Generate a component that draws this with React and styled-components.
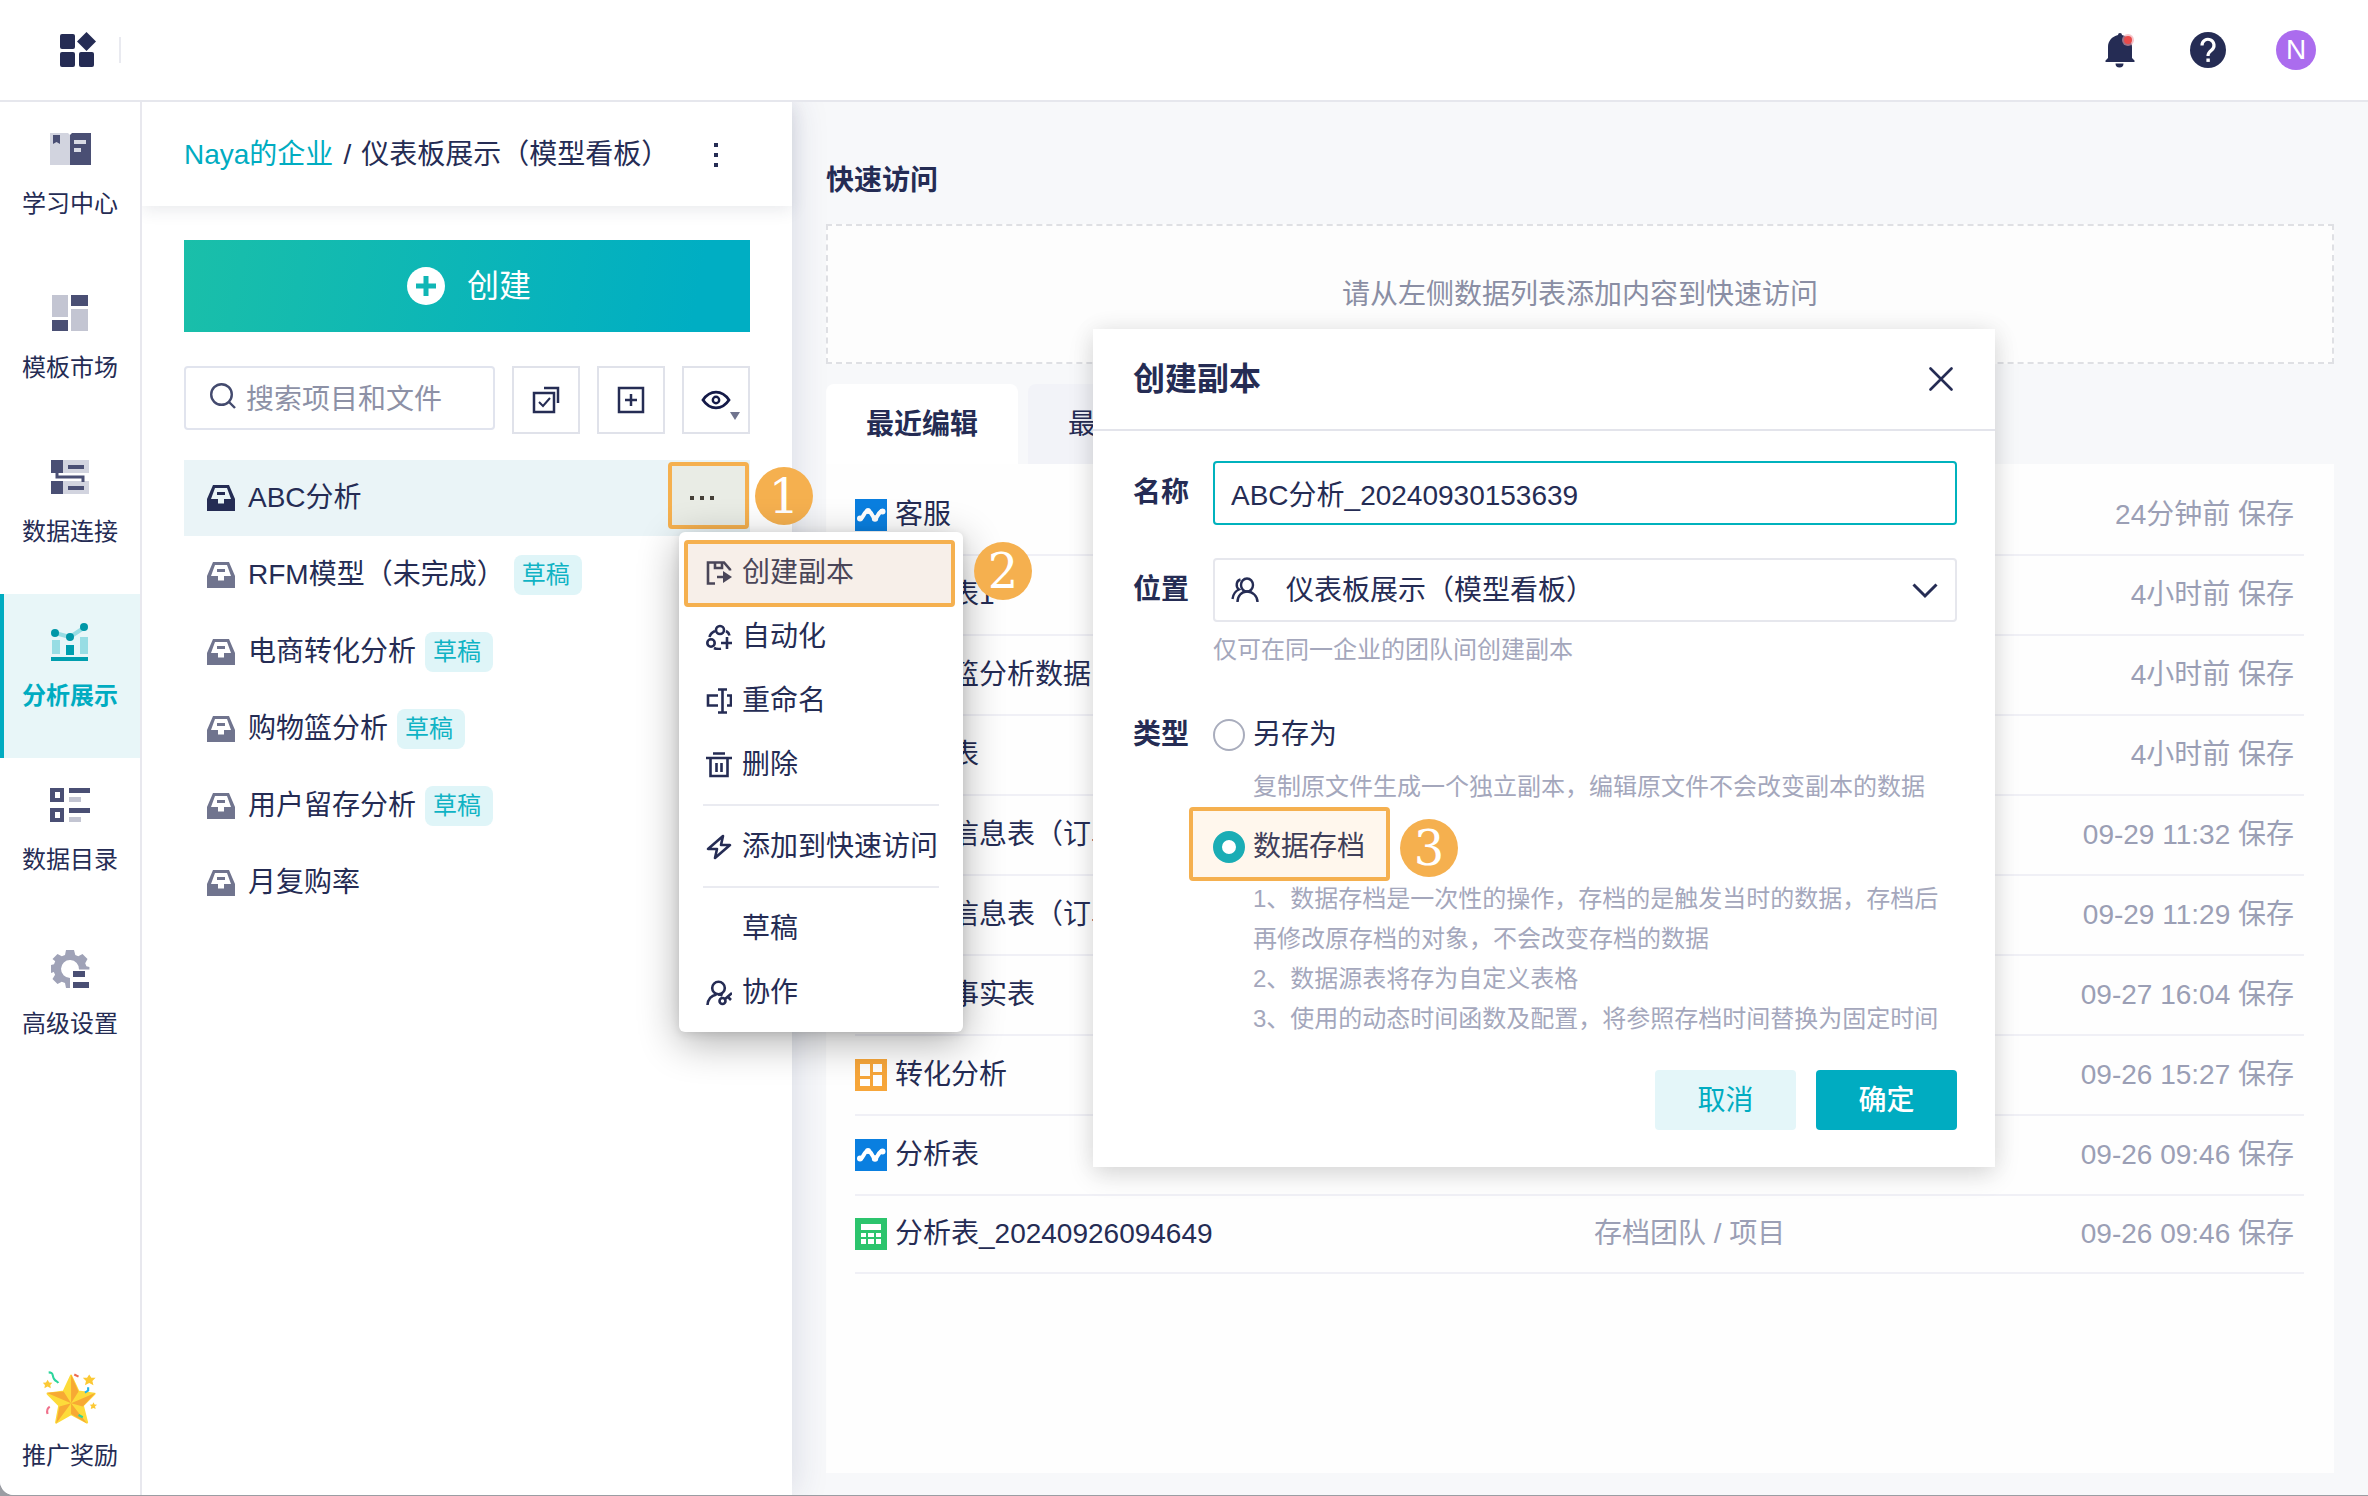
import React, { useState } from "react";
import styled, { createGlobalStyle, css } from "styled-components";

const ink = "#252c54";
const teal = "#00acc1";
const orange = "#f5b04f";

const GlobalStyle = createGlobalStyle`
  * { box-sizing: border-box; }
  body {
    margin: 0;
    background: #9b9da3;
    color: ${ink};
    font-family: "Liberation Sans", "Noto Sans CJK SC", sans-serif;
    font-size: 28px;
    line-height: 40px;
  }
  button, input, select { font: inherit; color: inherit; margin: 0; }
  button { background: none; border: 0; padding: 0; cursor: pointer; }
  a { color: inherit; text-decoration: none; }
  ul { list-style: none; margin: 0; padding: 0; }
  svg { display: block; flex: none; }
`;

/* ---------- page frame ---------- */
const Page = styled.div`
  position: relative;
  display: flex;
  flex-direction: column;
  min-height: calc(100vh - 1px);
  background: #f7f8fa;
  border-radius: 0 0 0 14px;
  overflow: hidden;
`;
const Header = styled.header`
  position: relative;
  z-index: 3;
  display: flex;
  align-items: center;
  justify-content: space-between;
  height: 102px;
  padding: 0 52px 0 58px;
  background: #fff;
  border-bottom: 2px solid #e6e7ed;
`;
const Brand = styled.div`
  display: flex;
  align-items: center;
  gap: 23px;
  &::after { content: ""; width: 2px; height: 26px; background: #e9eaf0; }
`;
const HeaderActions = styled.div`
  display: flex;
  align-items: center;
  gap: 50px;
  button:first-child { margin-right: 4px; }
`;
const Avatar = styled.button`
  width: 40px;
  height: 40px;
  border-radius: 50%;
  background: #ab6cee;
  color: #fff;
`;
const Columns = styled.div`
  display: flex;
  flex: 1;
`;

/* ---------- left navigation ---------- */
const Nav = styled.nav`
  position: relative;
  z-index: 3;
  display: flex;
  flex-direction: column;
  flex: none;
  width: 142px;
  background: #fff;
  border-right: 2px solid #e8e8ee;
`;
const NavItem = styled.a`
  display: flex;
  flex-direction: column;
  align-items: center;
  gap: 14px;
  height: 164px;
  padding-top: 26px;
  font-size: 24px;
  ${(p) =>
    p.$active &&
    css`
      background: #e8f6f8;
      box-shadow: inset 4px 0 0 ${teal};
      color: ${teal};
      font-weight: 700;
    `}
`;
const NavFooter = styled.div`
  margin-top: auto;
  a { gap: 6px; height: 129px; padding-top: 0; }
`;

/* ---------- project panel ---------- */
const Panel = styled.section`
  position: relative;
  z-index: 2;
  flex: none;
  width: 650px;
  background: #fff;
  box-shadow: 4px 0 32px rgba(40, 50, 100, 0.13);
`;
const PanelHeader = styled.div`
  display: flex;
  align-items: center;
  justify-content: space-between;
  height: 104px;
  padding: 2px 74px 0 42px;
  box-shadow: 0 4px 16px rgba(40, 50, 80, 0.1);
`;
const Crumb = styled.div`
  display: flex;
  gap: 10px;
  a { color: ${teal}; }
`;
const PanelBody = styled.div`
  padding: 34px 42px 0;
`;
const CreateButton = styled.button`
  display: flex;
  align-items: center;
  justify-content: center;
  gap: 22px;
  width: 100%;
  height: 92px;
  padding-left: 4px;
  background: linear-gradient(100deg, #1abfa9, #00aec3 90%);
  color: #fff;
  font-size: 32px;
`;
const Tools = styled.div`
  display: flex;
  align-items: flex-start;
  gap: 17px;
  margin: 34px 0 26px;
`;
const SearchBox = styled.label`
  display: flex;
  flex: 1;
  min-width: 0;
  align-items: center;
  gap: 8px;
  height: 64px;
  padding: 0 10px 0 24px;
  border: 2px solid #e1e4ee;
  border-radius: 4px;
  svg { margin-bottom: 4px; }
  input {
    width: 100%;
    min-width: 0;
    height: 44px;
    padding: 4px 0 0;
    border: 0;
    outline: 0;
    background: none;
  }
  input::placeholder { color: #8d91a6; opacity: 1; }
`;
const ToolButton = styled.button`
  display: grid;
  place-items: center;
  width: 68px;
  height: 68px;
  border: 2px solid #e0e2ea;
`;
const FileRow = styled.li`
  position: relative;
  display: flex;
  align-items: center;
  height: ${(p) => (p.$active ? 76 : 77)}px;
  padding: 0 1px 0 23px;
  background: ${(p) => (p.$active ? "#eaf4f7" : "transparent")};
  > a {
    display: flex;
    flex: 1;
    align-items: center;
    gap: 13px;
  }
`;
const Tag = styled.span`
  height: 40px;
  margin-left: -4px;
  padding: 0 12px 0 8px;
  border-radius: 8px;
  background: #dff5f8;
  color: #0fb3c4;
  font-size: 24px;
`;
const MoreButton = styled.button`
  display: grid;
  align-self: flex-start;
  place-items: center;
  width: 81px;
  height: 67px;
  margin-top: 2px;
  padding: 4px 14px 0 0;
  border: 4px solid ${orange};
  border-radius: 4px;
  background: #e9ece5;
`;

/* ---------- step markers ---------- */
const Step = styled.span`
  position: absolute;
  left: ${(p) => p.$x}px;
  top: ${(p) => p.$y}px;
  display: grid;
  place-items: center;
  width: 58px;
  height: 58px;
  border-radius: 50%;
  background: ${orange};
  color: #fff;
  font-family: "DejaVu Serif", serif;
  font-size: 48px;
  line-height: 58px;
`;

/* ---------- context menu ---------- */
const Menu = styled.div`
  position: absolute;
  left: 495px;
  top: 72px;
  z-index: 3;
  width: 284px;
  padding: 8px 0;
  border-radius: 6px;
  background: #fff;
  box-shadow: 0 10px 40px rgba(0, 0, 0, 0.32), 0 2px 10px rgba(0, 0, 0, 0.1);
`;
const MenuItem = styled.button`
  position: relative;
  z-index: 0;
  display: flex;
  align-items: center;
  gap: 10px;
  width: 100%;
  height: 64px;
  padding: 2px 0 0 27px;
  text-align: left;
  white-space: nowrap;
  ${(p) =>
    p.$marked &&
    css`
      color: #4a4658;
      &::after {
        content: "";
        position: absolute;
        z-index: -1;
        inset: 0 8px -3px 5px;
        border: 4px solid ${orange};
        border-radius: 4px;
        background: #f7efe9;
      }
    `}
`;
const MenuSpacer = styled.span`
  width: 26px;
`;
const MenuLine = styled.hr`
  height: 2px;
  margin: 8px 24px;
  border: 0;
  background: #eaebf1;
`;

/* ---------- main area ---------- */
const Main = styled.main`
  display: flex;
  flex: 1;
  flex-direction: column;
  min-width: 0;
  padding: 59px 34px 22px;
`;
const Title = styled.h2`
  margin: 0 0 23px;
  font-size: 28px;
  line-height: 40px;
`;
const QuickBox = styled.div`
  display: flex;
  align-items: center;
  justify-content: center;
  height: 140px;
  padding-top: 2px;
  border: 2px dashed #dfe0e4;
  background: #fdfdfd;
  color: #8a8ea4;
`;
const Tabs = styled.div`
  display: flex;
  gap: 10px;
  margin-top: 20px;
`;
const Tab = styled.button`
  width: 192px;
  height: 80px;
  padding-top: 2px;
  border-radius: 8px 8px 0 0;
  background: ${(p) => (p.$active ? "#fff" : "#f2f3f8")};
  font-weight: ${(p) => (p.$active ? 700 : 400)};
`;
const ListCard = styled.div`
  flex: 1;
  padding: 11px 30px 0 29px;
  background: #fefefe;
`;
const Table = styled.table`
  width: 100%;
  border-collapse: collapse;
  table-layout: fixed;
  tr { height: 80px; }
  tr:last-child { height: 78px; }
  td {
    padding: 0;
    border-bottom: 2px solid #f0f0f6;
    color: #9b9fb5;
  }
  td:first-child { width: 51%; color: ${ink}; }
  td:last-child { padding-right: 10px; text-align: right; }
`;
const FileName = styled.a`
  display: flex;
  align-items: center;
  gap: 8px;
`;

/* ---------- dialog ---------- */
const Dialog = styled.section`
  position: absolute;
  z-index: 5;
  top: 329px;
  right: 373px;
  width: 902px;
  background: #fff;
  box-shadow: 0 8px 24px rgba(0, 0, 0, 0.13), 0 0 24px rgba(0, 0, 0, 0.06);
`;
const DialogHeader = styled.header`
  display: flex;
  align-items: center;
  justify-content: space-between;
  height: 102px;
  padding: 0 42px 0 40px;
  border-bottom: 2px solid #e3e4eb;
  h3 { margin: 0; font-size: 32px; }
`;
const Form = styled.form`
  padding: 30px 38px 37px 40px;
`;
const Field = styled.div`
  display: grid;
  grid-template-columns: 56px 1fr;
  column-gap: 24px;
  margin-top: ${(p) => p.$gap || 0}px;
`;
const FieldLabel = styled.label`
  height: ${(p) => p.$height || 64}px;
  line-height: ${(p) => p.$height || 64}px;
  font-weight: 700;
`;
const TextInput = styled.input`
  width: 100%;
  height: 64px;
  padding: 0 16px;
  border: 2px solid #00b2bd;
  border-radius: 4px;
  outline: 0;
`;
const SelectWrap = styled.div`
  position: relative;
  select {
    width: 100%;
    height: 64px;
    padding: 2px 60px 0 71px;
    border: 2px solid #e6e7ed;
    border-radius: 4px;
    background: #fff;
    appearance: none;
  }
  svg { position: absolute; top: 18px; pointer-events: none; }
  svg:first-child { left: 18px; }
  svg:last-child { right: 19px; }
`;
const Hint = styled.p`
  margin: ${(p) => p.$top}px 0 0 ${(p) => p.$indent || 0}px;
  color: #a4a7bc;
  font-size: 24px;
  line-height: 40px;
`;
const Choice = styled.label`
  position: relative;
  z-index: 0;
  display: flex;
  align-items: center;
  gap: 8px;
  width: fit-content;
  height: 40px;
  margin-top: ${(p) => p.$top || 0}px;
  input {
    appearance: none;
    width: 32px;
    height: 32px;
    margin: 0;
    border: 2px solid #a9adbd;
    border-radius: 50%;
    background: #fff;
  }
  input:checked { border: 9px solid #1aadb5; }
  ${(p) =>
    p.$marked &&
    css`
      color: #40405a;
      &::before {
        content: "";
        position: absolute;
        z-index: -1;
        inset: -20px -25px -14px -24px;
        border: 4px solid ${orange};
        border-radius: 4px;
        background: #fff7ed;
      }
    `}
`;
const Footer = styled.footer`
  display: flex;
  justify-content: flex-end;
  gap: 20px;
  margin-top: 31px;
`;
const DialogButton = styled.button`
  width: 141px;
  height: 60px;
  border-radius: 4px;
  padding-top: 2px;
  background: ${(p) => (p.$primary ? teal : "#e4f6f9")};
  color: ${(p) => (p.$primary ? "#fff" : teal)};
  font-weight: ${(p) => (p.$primary ? 500 : 400)};
`;

/* ---------- icons ---------- */
const dark = "#4a4f74";
const light = "#c3c5d2";

const LogoIcon = () => (
  <svg width="38" height="38" viewBox="0 0 38 38" fill={ink}>
    <rect x="2" y="3" width="15" height="15" rx="2" />
    <rect x="2" y="21" width="15" height="15" rx="2" />
    <rect x="21" y="21" width="15" height="15" rx="2" />
    <path d="M28.5 1 38 10.5 28.5 20 19 10.5z" />
  </svg>
);
const BellIcon = () => (
  <svg width="31" height="36" viewBox="0 0 31 36">
    <path fill={ink} d="M13 3a2 2 0 0 1 4 0c6 1.500 10 6 10 12v11l2.500 2.500v1.500H.5v-1.500L3 26V15C3 9 7 4.500 13 3zM10.500 31.500h8a4 4 0 0 1-8 0z" />
    <circle cx="23" cy="8" r="6" fill="#f0a0a8" fillOpacity="0.6" />
    <circle cx="23" cy="8" r="4" fill="#e84a4a" />
  </svg>
);
const HelpIcon = () => (
  <svg width="36" height="36" viewBox="0 0 36 36">
    <circle cx="18" cy="18" r="18" fill={ink} />
    <path d="M12 13.500a6 6 0 1 1 9.600 4.600c-2.400 1.900-3.600 2.900-3.600 5.900" fill="none" stroke="#fff" strokeWidth="3.200" />
    <rect x="16.400" y="26.500" width="3.400" height="3.400" fill="#fff" />
  </svg>
);
const BookIcon = () => (
  <svg width="42" height="42" viewBox="0 0 42 42">
    <path fill="#d2d4df" d="M1 5h18l2 2v30H1z" />
    <path fill={dark} d="M4 7h7v9l-3.500-2L4 16zM23 5h19v32H21V7z" />
    <path fill="#d9dbe5" d="M25 12h12v4H25zM25 20h7v4h-7z" />
  </svg>
);
const TemplateIcon = () => (
  <svg width="42" height="42" viewBox="0 0 42 42">
    <path fill={light} d="M3 3h16v22H3zM22 17h17v22H22z" />
    <path fill={dark} d="M22 3h17v11H22zM3 28h16v11H3z" />
  </svg>
);
const LinkIcon = () => (
  <svg width="42" height="42" viewBox="0 0 42 42">
    <path fill="#d2d4df" d="M14 4h26v13H14zM14 25h26v13H14z" />
    <path fill={dark} d="M2 4h12v13H2zM2 25h12v13H2zM19 9h16v4H19zM19 30h16v4H19z" />
    <path fill="none" stroke={dark} strokeWidth="3" d="M8 16v5h26v5" />
  </svg>
);
const ChartIcon = () => (
  <svg width="42" height="42" viewBox="0 0 42 42">
    <path fill="#98dde4" d="M3 20h8v14H3zM31 17h8v17h-8z" />
    <path fill="none" stroke="#98dde4" strokeWidth="4" d="M6 13l15 4L36 7" />
    <path fill="#009eae" d="M17 25h8v10h-8zM2 37h37v4H2z" />
    <g fill="#0097a7"><circle cx="6" cy="13" r="4" /><circle cx="21" cy="17" r="4" /><circle cx="35" cy="7" r="4" /></g>
  </svg>
);
const CatalogIcon = () => (
  <svg width="42" height="42" viewBox="0 0 42 42">
    <path fill={dark} fillRule="evenodd" d="M1 4h14v14H1zM6 8v6h5V8zM1 24h14v14H1zM6 28v6h5v-6zM20 4h21v5H20zM20 24h21v5H20z" />
    <path fill={light} d="M20 13h12v5H20zM20 33h12v5H20z" />
  </svg>
);
const GearIcon = () => (
  <svg width="42" height="42" viewBox="0 0 42 42">
    <path
      fill="#9fa2b7"
      d="M17 2h8l1.300 5 3 1.300L33.500 6l5 5-2.300 4.300 1.200 3 3 .7v2.500H30A9 9 0 1 0 21 30v10h-4l-1-5-3.200-1.300L8.500 36l-5-5 2.600-4.300L4.800 24 2 25v-8l3-.7 1.200-3L3.500 11l5-5 4.300 2.300L16 7z"
    />
    <path fill={dark} d="M24 23h12v6H24zM24 34h16v6H24z" />
  </svg>
);
const StarIcon = () => (
  <svg width="64" height="64" viewBox="0 0 60 60">
    <path fill="#fddb3a" stroke="#fddb3a" strokeWidth="2" strokeLinejoin="round" d="M31 9l7 15 15 2-11 11 4 16-15-8-14 8 3-16L9 26l15-2z" />
    <path fill="#f7a934" d="M31 8v27l7-11zM54 25l-23 10 11 3zM46 54L31 35v10zM17 54l14-19-11 3zM8 25l23 10-7-11z" />
    <path fill="#fcc935" d="M48 8l2 3 4 0-3 3 1 4-4-2-4 2 1-4-3-3 4 0zM9 13l1.500 2.500 3 .3-2 2 .5 3-3-1.500-3 1.500.5-3-2-2 3-.3zM52 34l1 2 2.500.3-2 1.500.5 2.500-2-1-2.500 1 .5-2.500-1.500-1.500 2.500-.3z" />
    <g fill="none" strokeWidth="2">
      <path stroke="#2cd59c" d="M10 6c5 0 3 3 5 6s3 2 4 4M38 46l4 2" />
      <path stroke="#ee6a4e" d="M34 8l4 2" />
      <path stroke="#22b4e8" d="M44 25l3-2v-3" />
      <path stroke="#f0718c" d="M11 38c-3 2-3 4-2 7" />
    </g>
  </svg>
);
const KebabIcon = () => (
  <svg width="4" height="24" viewBox="0 0 4 24" fill={ink}>
    <path d="M0 0h4v4H0zM0 10h4v4H0zM0 20h4v4H0z" />
  </svg>
);
const DotsIcon = () => (
  <svg width="24" height="4" viewBox="0 0 24 4" fill="#453f38">
    <path d="M0 0h4v4H0zM10 0h4v4h-4zM20 0h4v4h-4z" />
  </svg>
);
const PlusCircleIcon = () => (
  <svg width="38" height="38" viewBox="0 0 38 38">
    <circle cx="19" cy="19" r="19" fill="#fff" />
    <path d="M19 9v20M9 19h20" stroke="#10b6b5" strokeWidth="5" />
  </svg>
);
const SearchIcon = () => (
  <svg width="28" height="28" viewBox="0 0 28 28" fill="none" stroke="#434a6e" strokeWidth="2.400">
    <circle cx="11.500" cy="12.500" r="10.300" />
    <path d="M18.500 19.500l6.500 6.500" />
  </svg>
);
const CheckAllIcon = () => (
  <svg width="28" height="28" viewBox="0 0 28 28" fill="none" stroke={ink}>
    <path strokeWidth="2.500" d="M2 7h20v19H2z" />
    <path strokeWidth="2.500" d="M12 2h14v15" />
    <path strokeWidth="2" d="M7 16l4 4 7-8" />
  </svg>
);
const AddBoxIcon = () => (
  <svg width="28" height="28" viewBox="0 0 28 28" fill="none" stroke={ink} strokeWidth="2.500">
    <path d="M2 2h24v24H2zM14 8v12M8 14h12" />
  </svg>
);
const EyeIcon = () => (
  <svg width="48" height="40" viewBox="0 0 48 40">
    <path fill="none" stroke="#141a48" strokeWidth="2.800" d="M11 20c7-10.500 19-10.500 26 0-7 10.500-19 10.500-26 0z" />
    <circle cx="24" cy="20" r="3.200" fill="none" stroke="#141a48" strokeWidth="2.400" />
    <path fill="#70748e" d="M38 32h10l-5 8z" />
  </svg>
);
const TrayIcon = ({ active }) => (
  <svg width="28" height="28" viewBox="0 0 28 28" fill={active ? ink : "#70748e"}>
    <path fillRule="evenodd" d="M6 1h16l6 14v12H0V15zM8 4L4 15h7v4.500h6V15h7L20 4z" />
    <path d="M10 8h8v3h-8z" />
  </svg>
);
const menuStroke = { width: 26, height: 26, viewBox: "0 0 26 26", fill: "none", stroke: "currentColor", strokeWidth: 2.6 };
const CopyIcon = () => (
  <svg {...menuStroke}>
    <path d="M9 23.500H2v-21h16l6 7v1M9 3v5h7V3M11 17h9" />
    <path d="M17 11l9 6-9 6z" fill="currentColor" stroke="none" />
  </svg>
);
const FlowIcon = () => (
  <svg {...menuStroke}>
    <circle cx="14" cy="6" r="4" />
    <circle cx="5" cy="19" r="3.700" />
    <path d="M21 13v12M15 19h12M9 7c-3 1.500-5 3.500-5.500 6M20 7c2 1 3 2.500 3.500 4.500M8 24c2 1 4.500 1.200 7 .8" />
  </svg>
);
const RenameIcon = () => (
  <svg {...menuStroke}>
    <path d="M12 7.500H2v10h10M21 7.500h4v10h-4M12 1.500h9M12 24.500h9M16.500 2v22" />
  </svg>
);
const TrashIcon = () => (
  <svg {...menuStroke}>
    <path d="M0 6h26M7 1.500h12M4.500 6v18h17V6M10.500 11v9M15.500 11v9" />
  </svg>
);
const BoltIcon = () => (
  <svg {...menuStroke} strokeLinejoin="round">
    <path d="M17 2L2 15h9L9 24 24 11h-9z" />
  </svg>
);
const CollabIcon = () => (
  <svg {...menuStroke}>
    <circle cx="12.500" cy="8" r="6.300" />
    <path d="M1.500 25c.5-6 4-9.500 9-10.500M12 14.500c2 0 3.500.5 4.500 1" />
    <circle cx="16.500" cy="21" r="3" />
    <path d="M19 19l7-6M22 17l3 3" />
  </svg>
);
const menuIcons = { copy: CopyIcon, flow: FlowIcon, rename: RenameIcon, trash: TrashIcon, bolt: BoltIcon, collab: CollabIcon };

const AnalysisIcon = () => (
  <svg width="32" height="32" viewBox="0 0 32 32">
    <path fill="#0a7fe0" d="M0 0h32v32H0z" />
    <path fill="none" stroke="#fff" strokeWidth="4" strokeLinecap="round" strokeLinejoin="round" d="M5 20c3 0 4-8 8-8s4 7 7 7 3-6 7-7" />
    <g fill="#fff"><circle cx="5" cy="19.500" r="3" /><circle cx="13" cy="12" r="3" /><circle cx="20" cy="19.500" r="3.200" /><circle cx="27.500" cy="12.500" r="3" /></g>
  </svg>
);
const BoardIcon = () => (
  <svg width="32" height="32" viewBox="0 0 32 32">
    <path fill="#f7a63a" d="M0 0h32v32H0z" />
    <path fill="#fff" d="M5 5h10v12H5zM18 5h9v8h-9zM5 20h10v7H5zM18 16h9v11h-9z" />
  </svg>
);
const SheetIcon = () => (
  <svg width="32" height="32" viewBox="0 0 32 32">
    <path fill="#2cc46d" d="M0 0h32v32H0z" />
    <path fill="#fff" d="M6 6h20v6H6zM6 15h5v4H6zM13 15h6v4h-6zM21 15h5v4h-5zM6 21h5v5H6zM13 21h6v5h-6zM21 21h5v5h-5z" />
  </svg>
);
const fileIcons = { analysis: AnalysisIcon, board: BoardIcon, sheet: SheetIcon };

const CloseIcon = () => (
  <svg width="24" height="24" viewBox="0 0 24 24" stroke={ink} strokeWidth="2.600" strokeLinecap="round">
    <path d="M1.500 1.500l21 21M22.500 1.500l-21 21" />
  </svg>
);
const TeamIcon = () => (
  <svg width="28" height="28" viewBox="0 0 28 28" fill="none" stroke={ink} strokeWidth="2.400">
    <ellipse cx="16" cy="9" rx="6" ry="6.500" />
    <path d="M6.500 26c0-6 4-10.500 9.500-10.500S26.500 20 26.500 26M9.500 3.500C5 4.500 4.500 11 8 13.500c-3.500 1.500-6 5-6.500 9.500" />
  </svg>
);
const ChevronIcon = () => (
  <svg width="26" height="28" viewBox="0 0 26 28" fill="none" stroke={ink} strokeWidth="3">
    <path d="M1.500 8.500L13 20 24.500 8.500" />
  </svg>
);

/* ---------- data ---------- */
const navItems = [
  ["学习中心", BookIcon],
  ["模板市场", TemplateIcon],
  ["数据连接", LinkIcon],
  ["分析展示", ChartIcon],
  ["数据目录", CatalogIcon],
  ["高级设置", GearIcon],
];
const projects = [
  { name: "ABC分析", active: true },
  { name: "RFM模型（未完成）", draft: true },
  { name: "电商转化分析", draft: true },
  { name: "购物篮分析", draft: true },
  { name: "用户留存分析", draft: true },
  { name: "月复购率" },
];
const menuItems = [
  { icon: "copy", label: "创建副本", marked: true },
  { icon: "flow", label: "自动化" },
  { icon: "rename", label: "重命名" },
  { icon: "trash", label: "删除", line: true },
  { icon: "bolt", label: "添加到快速访问", line: true },
  { label: "草稿" },
  { icon: "collab", label: "协作" },
];
const recent = [
  ["analysis", "客服", "", "24分钟前 保存"],
  ["sheet", "订单表1", "", "4小时前 保存"],
  ["sheet", "购物篮分析数据", "", "4小时前 保存"],
  ["sheet", "订单表", "", "4小时前 保存"],
  ["sheet", "订单信息表（订单）", "", "09-29 11:32 保存"],
  ["sheet", "订单信息表（订单）", "", "09-29 11:29 保存"],
  ["sheet", "订单事实表", "", "09-27 16:04 保存"],
  ["board", "转化分析", "", "09-26 15:27 保存"],
  ["analysis", "分析表", "", "09-26 09:46 保存"],
  ["sheet", "分析表_20240926094649", "存档团队 / 项目", "09-26 09:46 保存"],
];

function ContextMenu() {
  return (
    <Menu role="menu">
      {menuItems.map((item) => {
        const Icon = item.icon ? menuIcons[item.icon] : MenuSpacer;
        return (
          <React.Fragment key={item.label}>
            <MenuItem role="menuitem" $marked={item.marked}>
              <Icon />
              {item.label}
            </MenuItem>
            {item.line && <MenuLine />}
          </React.Fragment>
        );
      })}
      <Step $x={295} $y={10}>2</Step>
    </Menu>
  );
}

function CopyDialog() {
  const [name, setName] = useState("ABC分析_20240930153639");
  const [kind, setKind] = useState("archive");
  return (
    <Dialog role="dialog" aria-labelledby="copy-title">
      <DialogHeader>
        <h3 id="copy-title">创建副本</h3>
        <button aria-label="关闭"><CloseIcon /></button>
      </DialogHeader>
      <Form onSubmit={(e) => e.preventDefault()}>
        <Field>
          <FieldLabel htmlFor="copy-name">名称</FieldLabel>
          <TextInput id="copy-name" value={name} onChange={(e) => setName(e.target.value)} />
        </Field>
        <Field $gap={33}>
          <FieldLabel htmlFor="copy-place">位置</FieldLabel>
          <div>
            <SelectWrap>
              <TeamIcon />
              <select id="copy-place">
                <option>仪表板展示（模型看板）</option>
              </select>
              <ChevronIcon />
            </SelectWrap>
            <Hint $top={8}>仅可在同一企业的团队间创建副本</Hint>
          </div>
        </Field>
        <Field $gap={45}>
          <FieldLabel as="span" $height={40}>类型</FieldLabel>
          <div role="radiogroup" aria-label="类型">
            <Choice>
              <input type="radio" name="kind" checked={kind === "save"} onChange={() => setKind("save")} />
              另存为
            </Choice>
            <Hint $top={12} $indent={40}>复制原文件生成一个独立副本，编辑原文件不会改变副本的数据</Hint>
            <Choice $top={20} $marked>
              <input type="radio" name="kind" checked={kind === "archive"} onChange={() => setKind("archive")} />
              数据存档
              <Step $x={187} $y={-8}>3</Step>
            </Choice>
            <Hint $top={12} $indent={40}>
              1、数据存档是一次性的操作，存档的是触发当时的数据，存档后再修改原存档的对象，不会改变存档的数据
              <br />
              2、数据源表将存为自定义表格
              <br />
              3、使用的动态时间函数及配置，将参照存档时间替换为固定时间
            </Hint>
          </div>
        </Field>
        <Footer>
          <DialogButton type="button">取消</DialogButton>
          <DialogButton type="submit" $primary>确定</DialogButton>
        </Footer>
      </Form>
    </Dialog>
  );
}

export default function App() {
  return (
    <>
      <GlobalStyle />
      <Page>
        <Header>
          <Brand><LogoIcon /></Brand>
          <HeaderActions>
            <button aria-label="通知"><BellIcon /></button>
            <button aria-label="帮助"><HelpIcon /></button>
            <Avatar>N</Avatar>
          </HeaderActions>
        </Header>
        <Columns>
          <Nav>
            {navItems.map(([label, Icon]) => (
              <NavItem href="#" key={label} $active={label === "分析展示"}>
                <Icon />
                {label}
              </NavItem>
            ))}
            <NavFooter>
              <NavItem href="#">
                <StarIcon />
                推广奖励
              </NavItem>
            </NavFooter>
          </Nav>

          <Panel>
            <PanelHeader>
              <Crumb>
                <a href="#">Naya的企业</a>
                <span>/</span>
                <span>仪表板展示（模型看板）</span>
              </Crumb>
              <button aria-label="更多操作"><KebabIcon /></button>
            </PanelHeader>
            <PanelBody>
              <CreateButton><PlusCircleIcon />创建</CreateButton>
              <Tools>
                <SearchBox>
                  <SearchIcon />
                  <input type="text" aria-label="搜索" placeholder="搜索项目和文件" />
                </SearchBox>
                <ToolButton aria-label="批量选择"><CheckAllIcon /></ToolButton>
                <ToolButton aria-label="新建文件夹"><AddBoxIcon /></ToolButton>
                <ToolButton aria-label="显示"><EyeIcon /></ToolButton>
              </Tools>
              <ul>
                {projects.map((p) => (
                  <FileRow key={p.name} $active={p.active}>
                    <a href="#">
                      <TrayIcon active={p.active} />
                      {p.name}
                      {p.draft && <Tag>草稿</Tag>}
                    </a>
                    {p.active && (
                      <>
                        <MoreButton aria-label="更多"><DotsIcon /></MoreButton>
                        <Step $x={571} $y={7}>1</Step>
                        <ContextMenu />
                      </>
                    )}
                  </FileRow>
                ))}
              </ul>
            </PanelBody>
          </Panel>

          <Main>
            <Title>快速访问</Title>
            <QuickBox>请从左侧数据列表添加内容到快速访问</QuickBox>
            <Tabs>
              <Tab $active>最近编辑</Tab>
              <Tab>最近访问</Tab>
            </Tabs>
            <ListCard>
              <Table>
                <tbody>
                  {recent.map(([kind, name, team, time], i) => {
                    const Icon = fileIcons[kind];
                    return (
                      <tr key={i}>
                        <td><FileName href="#"><Icon />{name}</FileName></td>
                        <td>{team}</td>
                        <td>{time}</td>
                      </tr>
                    );
                  })}
                </tbody>
              </Table>
            </ListCard>
          </Main>
        </Columns>
        <CopyDialog />
      </Page>
    </>
  );
}
